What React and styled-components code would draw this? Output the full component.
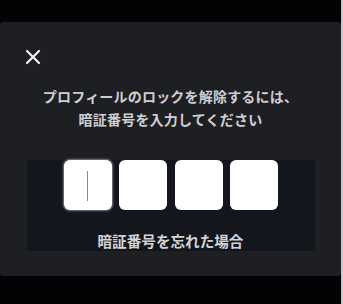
import React from "react";
import styled, { createGlobalStyle } from "styled-components";

const Global = createGlobalStyle`
  html, body { margin: 0; padding: 0; background: #030305; }
  body { font-family: "Noto Sans CJK JP", "Noto Sans", sans-serif; }
`;

const Page = styled.div`
  display: flex;
  width: 343px;
  height: 304px;
  background: #030305;
`;

const Main = styled.div`
  flex: 1;
  padding-top: 22px;
`;

const Stripe = styled.div`
  width: 2px;
  background: #c9c9cc;
`;

const Panel = styled.div`
  height: 254px;
  box-sizing: border-box;
  background: #1e1f23;
  border-radius: 3px;
  display: flex;
  flex-direction: column;
`;

const CloseButton = styled.button`
  align-self: flex-start;
  margin: 27px 0 0 24px;
  width: 18px;
  height: 16px;
  padding: 0;
  border: none;
  background: transparent;
  display: flex;
  align-items: center;
  justify-content: center;
  color: #f2f2f2;
`;

const Title = styled.p`
  margin: 20px 0 0;
  text-align: center;
  font-size: 14px;
  line-height: 23px;
  font-weight: 700;
  color: #cfcfd2;
  letter-spacing: 0.2px;
`;

const CodeArea = styled.div`
  margin: 29px auto 0;
  width: 288px;
  height: 91px;
  background: #14161d;
  display: flex;
  flex-direction: column;
  align-items: center;
`;

const Digits = styled.div`
  display: flex;
  gap: 7.5px;
  margin-left: 1px;
`;

const Digit = styled.div`
  position: relative;
  width: 48px;
  height: 50px;
  border-radius: 6px;
  background: #ffffff;
  box-shadow: ${(p) => (p.$active ? "0 0 2px 1px rgba(200,200,205,0.6)" : "none")};
`;

const Caret = styled.span`
  position: absolute;
  left: 23px;
  top: 11px;
  width: 1px;
  height: 30px;
  background: #8a8a8e;
`;

const Forgot = styled.a`
  margin-top: 21px;
  font-size: 14.6px;
  line-height: 20px;
  font-weight: 700;
  color: #d4d4d6;
  text-decoration: none;
`;

export default function App() {
  return (
    <>
      <Global />
      <Page>
        <Main>
          <Panel>
            <CloseButton aria-label="閉じる">
              <svg width="16" height="16" viewBox="0 0 16 16">
                <path d="M2 2 L14 14 M14 2 L2 14" stroke="currentColor" strokeWidth="2.2" strokeLinecap="round" />
              </svg>
            </CloseButton>
            <Title>
              プロフィールのロックを解除するには、
              <br />
              暗証番号を入力してください
            </Title>
            <CodeArea>
              <Digits>
                <Digit $active>
                  <Caret />
                </Digit>
                <Digit />
                <Digit />
                <Digit />
              </Digits>
              <Forgot>暗証番号を忘れた場合</Forgot>
            </CodeArea>
          </Panel>
        </Main>
        <Stripe />
      </Page>
    </>
  );
}
